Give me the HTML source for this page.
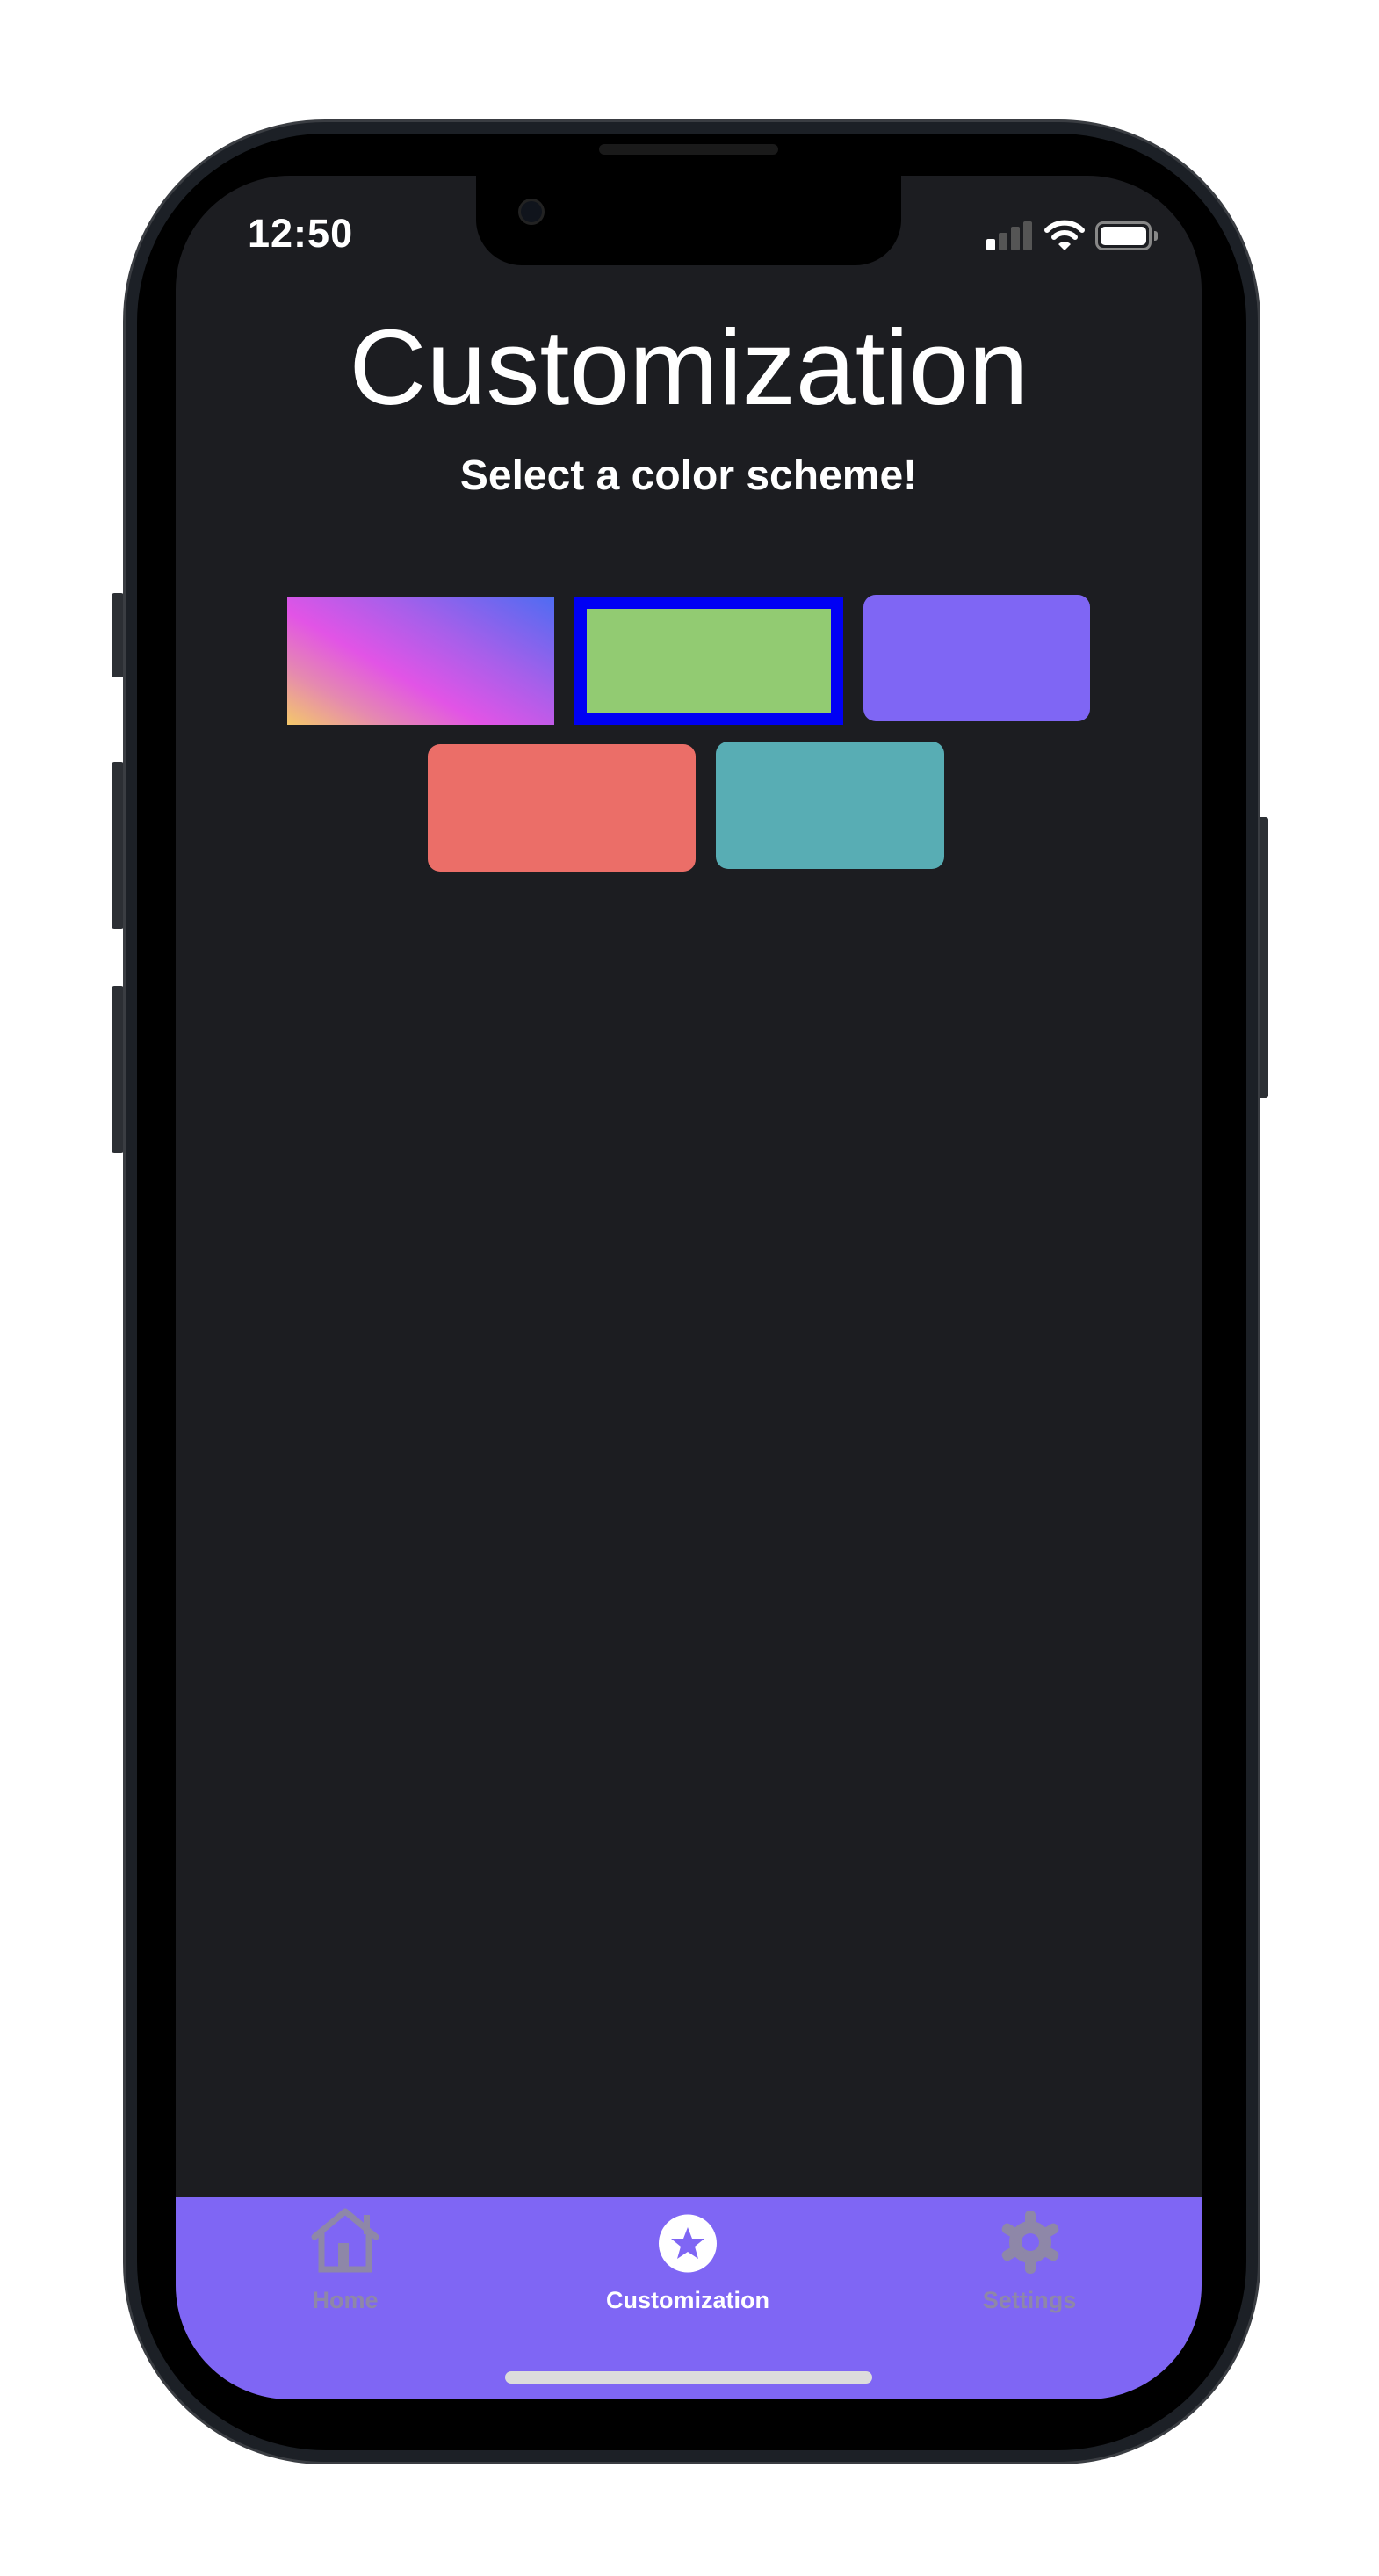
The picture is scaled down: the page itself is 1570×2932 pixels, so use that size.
<!DOCTYPE html>
<html><head><meta charset="utf-8">
<style>
*{margin:0;padding:0;box-sizing:border-box}
html,body{width:1570px;height:2932px;background:#fff;overflow:hidden;position:relative;font-family:"Liberation Sans",sans-serif}
.abs{position:absolute}
.outer{left:140px;top:136px;width:1295px;height:2669px;border-radius:230px;background:#1c2026;border:3px solid #3a3d42}
.bezel{left:156px;top:152px;width:1263px;height:2637px;border-radius:215px;background:#000}
.screen{left:200px;top:200px;width:1168px;height:2531px;border-radius:130px;background:#1c1d21;overflow:hidden}
.notch{left:542px;top:196px;width:484px;height:106px;background:#000;border-radius:0 0 52px 52px}
.btn{background:#2c2f34;border-radius:3px}
.sw{position:absolute}
.tab{left:0;top:2301px;width:1168px;height:230px;background:#7f66f4}
.lbl{position:absolute;font-weight:bold;font-size:27px;text-align:center;width:300px;top:2402px;line-height:32px}
</style></head><body>
<div class="abs btn" style="left:127px;top:675px;width:14px;height:96px"></div>
<div class="abs btn" style="left:127px;top:867px;width:14px;height:190px"></div>
<div class="abs btn" style="left:127px;top:1122px;width:14px;height:190px"></div>
<div class="abs btn" style="left:1432px;top:930px;width:12px;height:320px"></div>
<div class="abs outer"></div>
<div class="abs bezel"></div>
<div class="abs" style="left:682px;top:164px;width:204px;height:12px;border-radius:6px;background:#1a1a1a"></div>
<div class="abs screen">
  <div class="abs" style="left:82px;top:40px;color:#fff;font-weight:bold;font-size:45px;letter-spacing:1px">12:50</div>
  <div class="abs" style="left:923px;top:72px;width:10px;height:13px;background:#fff;border-radius:2px"></div>
  <div class="abs" style="left:937px;top:65px;width:10px;height:20px;background:#555;border-radius:2px"></div>
  <div class="abs" style="left:951px;top:58px;width:10px;height:27px;background:#555;border-radius:2px"></div>
  <div class="abs" style="left:965px;top:52px;width:10px;height:33px;background:#555;border-radius:2px"></div>
  <svg class="abs" style="left:988px;top:50px" width="48" height="36" viewBox="0 0 48 36">
    <path d="M4 12 A28 28 0 0 1 44 12" stroke="#fff" stroke-width="6" fill="none" stroke-linecap="round"/>
    <path d="M12 20 A17 17 0 0 1 36 20" stroke="#fff" stroke-width="6" fill="none" stroke-linecap="round"/>
    <path d="M17 28 L24 35 L31 28 A10 10 0 0 0 17 28Z" fill="#fff"/>
  </svg>
  <div class="abs" style="left:1047px;top:52px;width:64px;height:33px;border:3px solid #888;border-radius:9px;padding:3px"><div style="width:100%;height:100%;background:#fff;border-radius:5px"></div></div>
  <div class="abs" style="left:1114px;top:63px;width:4px;height:11px;background:#888;border-radius:0 3px 3px 0"></div>

  <div class="abs" style="left:0;top:148px;width:1168px;text-align:center;color:#fff;font-size:122px;line-height:140px">Customization</div>
  <div class="abs" style="left:0;top:312px;width:1168px;text-align:center;color:#fff;font-size:48px;font-weight:bold;line-height:60px">Select a color scheme!</div>

  <div class="sw" style="left:127px;top:479px;width:304px;height:146px;background:linear-gradient(30deg,#f4c86a 0%,#e589b0 20%,#e254e6 40%,#a85fea 65%,#4e6cf2 100%)"></div>
  <div class="sw" style="left:454px;top:479px;width:306px;height:146px;background:#92cb72;border:14px solid #0000f4"></div>
  <div class="sw" style="left:783px;top:477px;width:258px;height:144px;background:#7f66f4;border-radius:14px"></div>
  <div class="sw" style="left:287px;top:647px;width:305px;height:145px;background:#eb6e68;border-radius:14px"></div>
  <div class="sw" style="left:615px;top:644px;width:260px;height:145px;background:#58adb4;border-radius:14px"></div>

  <div class="abs tab"></div>
  <svg class="abs" style="left:152px;top:2313px" width="82" height="74" viewBox="0 0 82 74">
    <path d="M6 33 L41 4 L76 33" stroke="#8e87a8" stroke-width="7" fill="none" stroke-linejoin="round" stroke-linecap="round"/>
    <path d="M14 28 V70 H68 V28" stroke="#8e87a8" stroke-width="7" fill="none"/>
    <rect x="33" y="40" width="12" height="30" fill="#8e87a8"/>
    <rect x="62" y="8" width="7" height="22" fill="#8e87a8"/>
  </svg>
  <svg class="abs" style="left:550px;top:2320px" width="66" height="67" viewBox="0 0 66 67">
    <circle cx="33" cy="33.5" r="33" fill="#fff"/>
    <path d="M33 15 L38 28 L52 28 L41 37 L45 51 L33 43 L21 51 L25 37 L14 28 L28 28Z" fill="#7f66f4"/>
  </svg>
  <svg class="abs" style="left:938px;top:2316px" width="70" height="72" viewBox="0 0 70 72">
    <g fill="#8e87a8">
      <circle cx="35" cy="36" r="24"/>
      <rect x="29" y="0" width="12" height="72" rx="5"/>
      <rect x="29" y="0" width="12" height="72" rx="5" transform="rotate(60 35 36)"/>
      <rect x="29" y="0" width="12" height="72" rx="5" transform="rotate(-60 35 36)"/>
    </g>
    <circle cx="35" cy="36" r="10" fill="#7f66f4"/>
  </svg>
  <div class="lbl" style="left:43px;color:#8e87a8">Home</div>
  <div class="lbl" style="left:433px;color:#fff">Customization</div>
  <div class="lbl" style="left:822px;color:#8e87a8">Settings</div>
  <div class="abs" style="left:375px;top:2499px;width:418px;height:14px;border-radius:7px;background:#dcdcdc"></div>
</div>
<div class="abs notch"></div>
<div class="abs" style="left:590px;top:226px;width:30px;height:30px;border-radius:50%;background:#10141c;border:3px solid #222"></div>
</body></html>
